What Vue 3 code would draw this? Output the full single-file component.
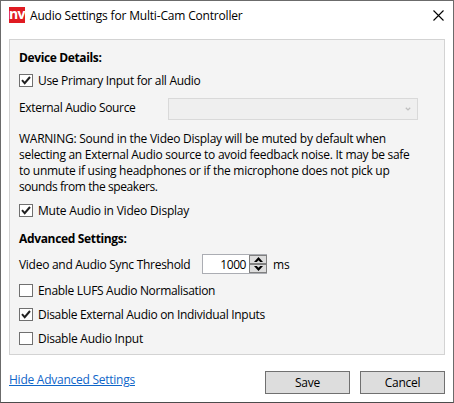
<script setup>
import { ref } from 'vue'

const usePrimary = ref(true)
const muteAudio = ref(true)
const advanced = ref([
  { label: 'Enable LUFS Audio Normalisation', cls: 'lufs', on: false },
  { label: 'Disable External Audio on Individual Inputs', cls: 'external', on: true },
  { label: 'Disable Audio Input', cls: 'input', on: false },
])
</script>

<template>
  <div class="window">
    <header class="titlebar">
      <span class="logo">nv</span>
      <span class="title">Audio Settings for Multi-Cam Controller</span>
      <svg class="close" width="11" height="11" viewBox="0 0 11 11">
        <path d="M0.5 0.5L10.5 10.5M10.5 0.5L0.5 10.5" stroke="#000" stroke-width="1.1" fill="none" />
      </svg>
    </header>

    <main class="panel">
      <h2 class="device">Device Details:</h2>

      <div class="check primary" @click="usePrimary = !usePrimary">
        <span class="box">
          <svg v-if="usePrimary" width="12" height="11" viewBox="0 0 12 11"><path d="M2 5.2L4.7 8.2L10 2" /></svg>
        </span>
        <span>Use Primary Input for all Audio</span>
      </div>

      <div class="source">
        <span class="source-label">External Audio Source</span>
        <div class="combo">
          <svg width="6" height="5" viewBox="0 0 6 5"><path d="M0.8 0.8L3 2.9L5.2 0.8" /></svg>
        </div>
      </div>

      <p class="warning">
        <span class="w1">WARNING: Sound in the Video Display will be muted by default when</span>
        <span class="w2">selecting an External Audio source to avoid feedback noise. It may be safe</span>
        <span class="w3">to unmute if using headphones or if the microphone does not pick up</span>
        <span class="w4">sounds from the speakers.</span>
      </p>

      <div class="check mute" @click="muteAudio = !muteAudio">
        <span class="box">
          <svg v-if="muteAudio" width="12" height="11" viewBox="0 0 12 11"><path d="M2 5.2L4.7 8.2L10 2" /></svg>
        </span>
        <span>Mute Audio in Video Display</span>
      </div>

      <h2 class="adv">Advanced Settings:</h2>

      <div class="sync">
        <span class="sync-label">Video and Audio Sync Threshold</span>
        <div class="spinner">
          <span class="value">1000</span>
          <div class="arrows">
            <i><svg width="9" height="5" viewBox="0 0 9 5"><path d="M0 5L4.5 0L9 5H6.2L4.5 3.3L2.8 5Z" /></svg></i>
            <i><svg width="9" height="5" viewBox="0 0 9 5"><path d="M0 0L4.5 5L9 0H6.2L4.5 1.7L2.8 0Z" /></svg></i>
          </div>
        </div>
        <span class="unit">ms</span>
      </div>

      <div v-for="o in advanced" :key="o.cls" class="check" :class="o.cls" @click="o.on = !o.on">
        <span class="box">
          <svg v-if="o.on" width="12" height="11" viewBox="0 0 12 11"><path d="M2 5.2L4.7 8.2L10 2" /></svg>
        </span>
        <span>{{ o.label }}</span>
      </div>
    </main>

    <footer class="footer">
      <a class="link">Hide Advanced Settings</a>
      <button>Save</button>
      <button>Cancel</button>
    </footer>
  </div>
</template>

<style>
body { background: #fff; }
</style>

<style scoped>
* { box-sizing: border-box; }
svg { display: block; }
.window {
  width: 454px;
  height: 403px;
  border: 1px solid #6b6b6b;
  border-bottom-color: #4c4c4c;
  background: #fff;
  color: #000;
  font: 12px/16px "Open Sans", "Liberation Sans", sans-serif;
  white-space: nowrap;
  overflow: hidden;
  cursor: default;
}
.titlebar { display: flex; align-items: flex-start; height: 38px; padding: 6px 9px 0 8px; }
.logo {
  width: 16px;
  height: 16px;
  background: #e01b22;
  color: #fff;
  font: 700 14px/13px "Open Sans", sans-serif;
  letter-spacing: -0.7px;
  text-align: center;
}
.title { padding-top: 1px; margin-left: 5px; letter-spacing: -0.18px; }
.close { margin: 3px 0 0 auto; }
.panel {
  width: 436px;
  height: 316px;
  margin-left: 8px;
  padding: 10px 9px 0;
  border: 1px solid #d3d3d3;
  background: #f4f4f4;
}
h2 { margin: 0; font: 700 12px/16px "Open Sans", sans-serif; }
.device { letter-spacing: -0.37px; }
.check { display: flex; align-items: flex-start; height: 16px; gap: 5px; }
.box { flex: none; width: 14px; height: 13px; margin-top: 1px; border: 1px solid #707070; background: #fff; }
.box path { fill: none; stroke: #212121; stroke-width: 2; }
.primary { margin-top: 7px; letter-spacing: -0.3px; }
.source { display: flex; height: 22px; margin-top: 9px; letter-spacing: -0.32px; }
.source-label { width: 149px; padding-top: 2px; }
.combo { display: flex; width: 250px; height: 22px; padding: 8px 6px 0 0; justify-content: flex-end; border: 1px solid #d9d9d9; background: #efefef; }
.combo path { fill: none; stroke: #bfbfbf; stroke-width: 1.3; }
.warning { display: grid; margin: 11px 0 0; }
.w1 { letter-spacing: -0.25px; }
.w2 { letter-spacing: -0.28px; }
.w3 { letter-spacing: -0.27px; }
.w4 { letter-spacing: -0.42px; }
.mute { margin-top: 8px; letter-spacing: -0.2px; }
.adv { margin-top: 12px; letter-spacing: -0.34px; }
.sync { display: flex; height: 20px; margin-top: 7px; letter-spacing: -0.28px; }
.sync-label { width: 183px; padding-top: 3px; }
.spinner { display: flex; width: 65px; height: 20px; border: 1px solid #abadb3; background: #fff; }
.value { flex: 1; padding: 2px 3px 0 0; text-align: right; letter-spacing: -0.45px; }
.arrows { width: 18px; height: 19px; margin-right: -1px; display: grid; grid-template-rows: 9px 9px; }
.arrows i { display: flex; align-items: center; justify-content: center; border: 1px solid #808080; background: #ddd; }
.unit { padding: 3px 0 0 6px; letter-spacing: -0.1px; }
.lufs { margin-top: 9px; letter-spacing: -0.31px; }
.external { margin-top: 8px; letter-spacing: -0.3px; }
.input { margin-top: 8px; letter-spacing: -0.25px; }
.footer { display: flex; align-items: flex-start; padding: 16px 8px 0; }
.link { margin: 1px auto 0 0; color: #0f66c9; letter-spacing: -0.25px; text-decoration: underline; text-underline-offset: 1px; text-decoration-thickness: 1px; }
button {
  width: 85px;
  height: 23px;
  margin-left: 10px;
  padding: 1px 0 0;
  border: 1px solid #707070;
  border-radius: 0;
  background: #ddd;
  color: #000;
  font: 12px/16px "Open Sans", sans-serif;
  letter-spacing: -0.25px;
}
</style>
